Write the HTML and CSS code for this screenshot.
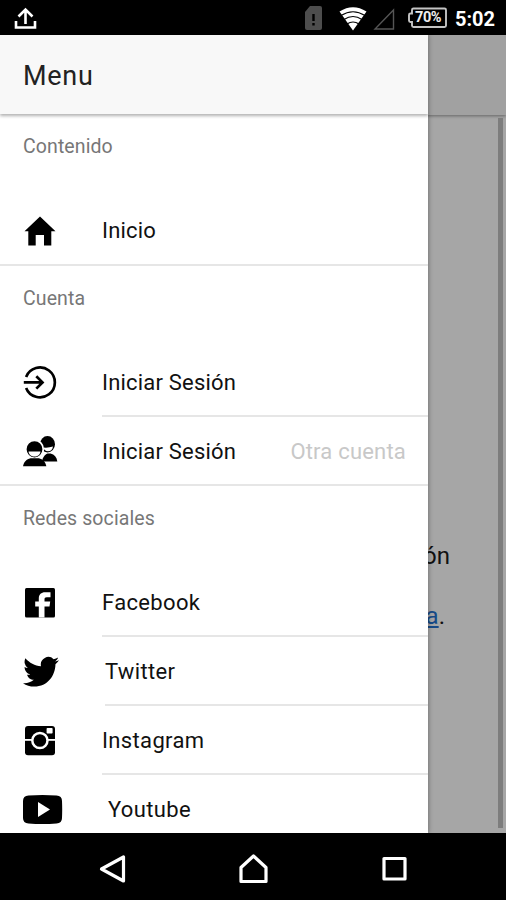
FILE: index.html
```html
<!DOCTYPE html>
<html lang="es">
<head>
    <meta charset="UTF-8">
    <meta name="viewport" content="width=device-width, initial-scale=1.0">
    <title>Menu</title>

    <link rel="stylesheet" href="styles.css">
</head>
<body>

    <header class="status-bar">
        <svg class="upload" width="24" height="24" viewBox="0 0 24 24" fill="none" stroke="#fff" stroke-width="2.6">
            <path d="M2 14v6.500h19V14M11.500 17V2.500M4.500 9.500l7-7 7 7"/>
        </svg>
        <div class="status-icons">
            <svg width="216" height="35" viewBox="0 0 216 35">
                <path d="M20 6h10q2 0 2 2v20q0 2-2 2H17q-2 0-2-2V12z" fill="#4d4d4d"/>
                <path d="M23.500 14v7M23.500 23v2.500" stroke="#000" stroke-width="2.400"/>
                <path d="M49.500 11.500Q63 3 76.500 11.500L63 30.500z" fill="#fff"/>
                <path d="M51 15.500q12-7.500 24 0M54 19.500q9-6 18 0M57 24q6-4 12 0" fill="none" stroke="#000" stroke-width="1.100"/>
                <path d="M103.500 10v19H85z" fill="none" stroke="#555" stroke-width="1.400"/>
                <path d="M123.500 8.500h31q1.500 0 1.500 1.500v15.500q0 1.500-1.500 1.500h-31q-1.500 0-1.500-1.500v-3.500h-1.500q-1.500 0-1.500-1.500v-5.500q0-1.500 1.500-1.500h1.500v-3.500q0-1.500 1.500-1.500z" fill="none" stroke="#c4c4c4" stroke-width="1.900"/>
            </svg>
            <span class="battery">70%</span>
            <span class="clock">5:02</span>
        </div>
    </header>

    <main>
        <div class="page">
            <div class="page-header"></div>
            <div class="page-content">
                <p>ón</p>
                <p><a href="#">a</a>.</p>
                <div class="scrollbar"></div>
            </div>
        </div>

        <nav class="drawer">
            <h1>Menu</h1>

            <section>
                <h2>Contenido</h2>
                <ul>
                    <li>
                        <svg class="icon" width="40" height="34" viewBox="0 0 40 34">
                            <path d="M17 2.500L32.500 17.300h-4.200v14.200H21V21h-8.300v10.500H5.300V17.300H1.500z"/>
                        </svg>
                        <div class="item">Inicio</div>
                    </li>
                </ul>
            </section>

            <section>
                <h2>Cuenta</h2>
                <ul>
                    <li>
                        <svg class="icon" width="40" height="34" viewBox="0 0 40 34" fill="none" stroke="#000" stroke-width="2.700">
                            <path d="M3.100 10.900a14.900 14.900 0 1 1 0 11M.8 16.400h18.500M13.300 10.200l6.200 6.200-6.200 6.200"/>
                        </svg>
                        <div class="item">Iniciar Sesión</div>
                    </li>
                    <li>
                        <svg class="icon" width="40" height="34" viewBox="0 0 40 34">
                            <ellipse cx="24.500" cy="10.200" rx="7.500" ry="8.200"/>
                            <path d="M20.500 13.500q5 .5 9.500-1c-.5 3.500-2.500 4.800-5 4.800-2.300 0-4-1.300-4.500-3.800z" fill="#fff"/>
                            <path d="M19 27.500c.8-4.500 2.500-6.500 5.500-8h3c4 1 6.200 3.800 6.800 8z"/>
                            <ellipse cx="11.500" cy="15.300" rx="8.800" ry="9" stroke="#fff" stroke-width="1.800"/>
                            <path d="M5.500 17.500h12c-.3 3-2.800 5-6 5s-5.700-2-6-5z" fill="#fff"/>
                            <path d="M0 32.300c.8-4.500 3.500-7 7.500-8h8.300c4 1 6.700 3.500 7.500 8z"/>
                        </svg>
                        <div class="item">Iniciar Sesión <span class="note">Otra cuenta</span></div>
                    </li>
                </ul>
            </section>

            <section>
                <h2>Redes sociales</h2>
                <ul>
                    <li>
                        <svg class="icon" width="40" height="34" viewBox="0 0 40 34">
                            <rect x="2" y="2" width="30" height="29.500" rx="1.500"/>
                            <path d="M15.800 31.500V20.500h-3.600v-5h3.600v-3c0-4 2.500-6.200 6.200-6.200h5.500v4.900h-3.700c-1.800 0-2.300.7-2.300 2.300v2h5.700l-.7 5h-5v11z" fill="#fff"/>
                        </svg>
                        <div class="item">Facebook</div>
                    </li>
                    <li class="twitter">
                        <svg class="icon" width="40" height="34" viewBox="0 0 40 34">
                            <path d="M21.400 3.500c-.7.300-1.500.5-2.300.6.800-.5 1.500-1.300 1.800-2.200-.8.500-1.600.8-2.500 1a4.200 4.200 0 0 0-7.100 3.800C7.900 6.500 4.800 4.800 2.600 2.300a4.200 4.200 0 0 0 1.300 5.400c-.7 0-1.300-.2-1.800-.5 0 2 1.400 3.700 3.200 4.100-.6.200-1.200.2-1.800.1.500 1.600 2 2.800 3.800 2.800-1.700 1.400-3.900 2-6.100 1.800 1.800 1.200 4 1.900 6.300 1.900 7.600 0 11.900-6.300 11.900-12.300.8-.6 1.500-1.300 2-2.100z" transform="translate(-2.200 -1) scale(1.786 1.820)"/>
                        </svg>
                        <div class="item">Twitter</div>
                    </li>
                    <li>
                        <svg class="icon" width="40" height="34" viewBox="0 0 40 34">
                            <rect x="2" y="2" width="30" height="29.300" rx="3"/>
                            <path d="M2 15.900h30" stroke="#fff" stroke-width="1.800"/>
                            <circle cx="16.900" cy="16.500" r="7.600" stroke="#fff" stroke-width="2.500"/>
                            <rect x="23.600" y="4" width="6" height="5.500" rx=".8" fill="#fff"/>
                        </svg>
                        <div class="item">Instagram</div>
                    </li>
                    <li class="youtube">
                        <svg class="icon" width="40" height="34" viewBox="0 0 40 34">
                            <path d="M5.500 2.500q14-1 28 0 5.500.4 5.500 5.500.4 8.500 0 17 0 5-5.500 5.500-14 1-28 0Q0 30 0 25q-.4-8.500 0-17 0-5.100 5.500-5.500z"/>
                            <path d="M15 9v15l12-7.500z" fill="#fff"/>
                        </svg>
                        <div class="item">Youtube</div>
                    </li>
                </ul>
            </section>
        </nav>
    </main>

    <footer class="nav-bar">
        <svg width="30" height="30" viewBox="0 0 30 30"><path d="M26.500 3v24L4.500 15z"/></svg>
        <svg width="30" height="30" viewBox="0 0 30 30"><path d="M15.500 2L28 13.500v14H3v-14z"/></svg>
        <svg width="30" height="30" viewBox="0 0 30 30"><rect x="5" y="4.500" width="21" height="20.500"/></svg>
    </footer>

</body>
</html>
```
FILE: styles.css
```css
* {
    box-sizing: border-box;
}

body {
    margin: 0;
    height: 900px;
    display: flex;
    flex-direction: column;
    font-family: Roboto, sans-serif;
    color: #111;
    background-color: #000;
    overflow: hidden;
}

h1, h2, p, ul {
    margin: 0;
    padding: 0;
    font-weight: 400;
}

svg {
    display: block;
    flex: none;
}

/* Status bar */
.status-bar {
    height: 35px;
    flex: none;
    display: flex;
    justify-content: space-between;
    align-items: center;
    padding-left: 14px;
    color: #fff;
}

.upload {
    margin-top: 2px;
}

.status-icons {
    position: relative;
}

.battery, .clock {
    position: absolute;
    line-height: 20px;
}

.battery {
    left: 125px;
    top: 8px;
    font-size: 14.5px;
    font-weight: 700;
    letter-spacing: -0.4px;
    color: #eee;
}

.clock {
    right: 11px;
    top: 9px;
    font-size: 20px;
    font-weight: 700;
}

main {
    position: relative;
    height: 798px;
    flex: none;
    overflow: hidden;
}

/* Dimmed page behind the drawer */
.page {
    height: 100%;
    display: flex;
    flex-direction: column;
    background-color: #a6a6a6;
}

.page-header {
    height: 80px;
    flex: none;
    background-color: #a1a1a1;
    box-shadow: 0 1px 3px rgba(0, 0, 0, 0.4);
}

.page-content {
    position: relative;
    flex: 1;
    padding: 426px 56px 0 0;
    text-align: right;
    font-size: 24px;
    line-height: 30px;
}

.page-content p {
    margin-bottom: 30px;
}

.page-content p + p {
    padding-right: 5px;
}

.page-content a {
    color: #174a87;
}

.scrollbar {
    position: absolute;
    top: 3px;
    right: 3px;
    bottom: 5px;
    width: 5px;
    background-color: #7d7d7d;
}

/* Drawer */
.drawer {
    position: absolute;
    top: 0;
    left: 0;
    bottom: 0;
    width: 428px;
    background-color: #fff;
    box-shadow: 0 0 5px rgba(0, 0, 0, 0.4);
    overflow: hidden;
}

h1 {
    position: relative;
    height: 79px;
    padding-left: 23px;
    line-height: 83px;
    font-size: 27px;
    letter-spacing: 0.7px;
    color: #222;
    background-color: #f8f8f8;
    box-shadow: 0 2px 3px rgba(0, 0, 0, 0.3);
}

h2 {
    height: 82px;
    padding-left: 23px;
    line-height: 65px;
    font-size: 19.5px;
    letter-spacing: 0.1px;
    color: #777;
}

section:first-of-type h2 {
    height: 83px;
}

ul {
    list-style: none;
}

section:not(:last-child) ul {
    border-bottom: 2px solid #e6e6e6;
}

li {
    height: 69px;
    display: flex;
    align-items: center;
    padding-left: 23px;
}

.icon {
    margin-right: 39px;
}

.item {
    flex: 1;
    height: 69px;
    display: flex;
    justify-content: space-between;
    padding-right: 22px;
    line-height: 69px;
    font-size: 22px;
    letter-spacing: 0.2px;
    border-bottom: 2px solid #e6e6e6;
}

section:not(:last-child) li:last-child,
section:not(:last-child) li:last-child .item {
    height: 67px;
    border-bottom: none;
}

section:first-of-type .item {
    line-height: 67px;
}

section:last-child .item {
    line-height: 70px;
    letter-spacing: 0.35px;
}

.twitter .icon {
    margin-right: 42px;
}

.youtube .icon {
    margin-right: 45px;
}

.note {
    color: #c8c8c8;
}

/* Navigation buttons */
.nav-bar {
    flex: 1;
    display: flex;
    justify-content: center;
    align-items: center;
    gap: 111px;
    padding-top: 4px;
}

.nav-bar svg {
    fill: none;
    stroke: #fff;
    stroke-width: 3.2;
    stroke-linejoin: round;
}
```
